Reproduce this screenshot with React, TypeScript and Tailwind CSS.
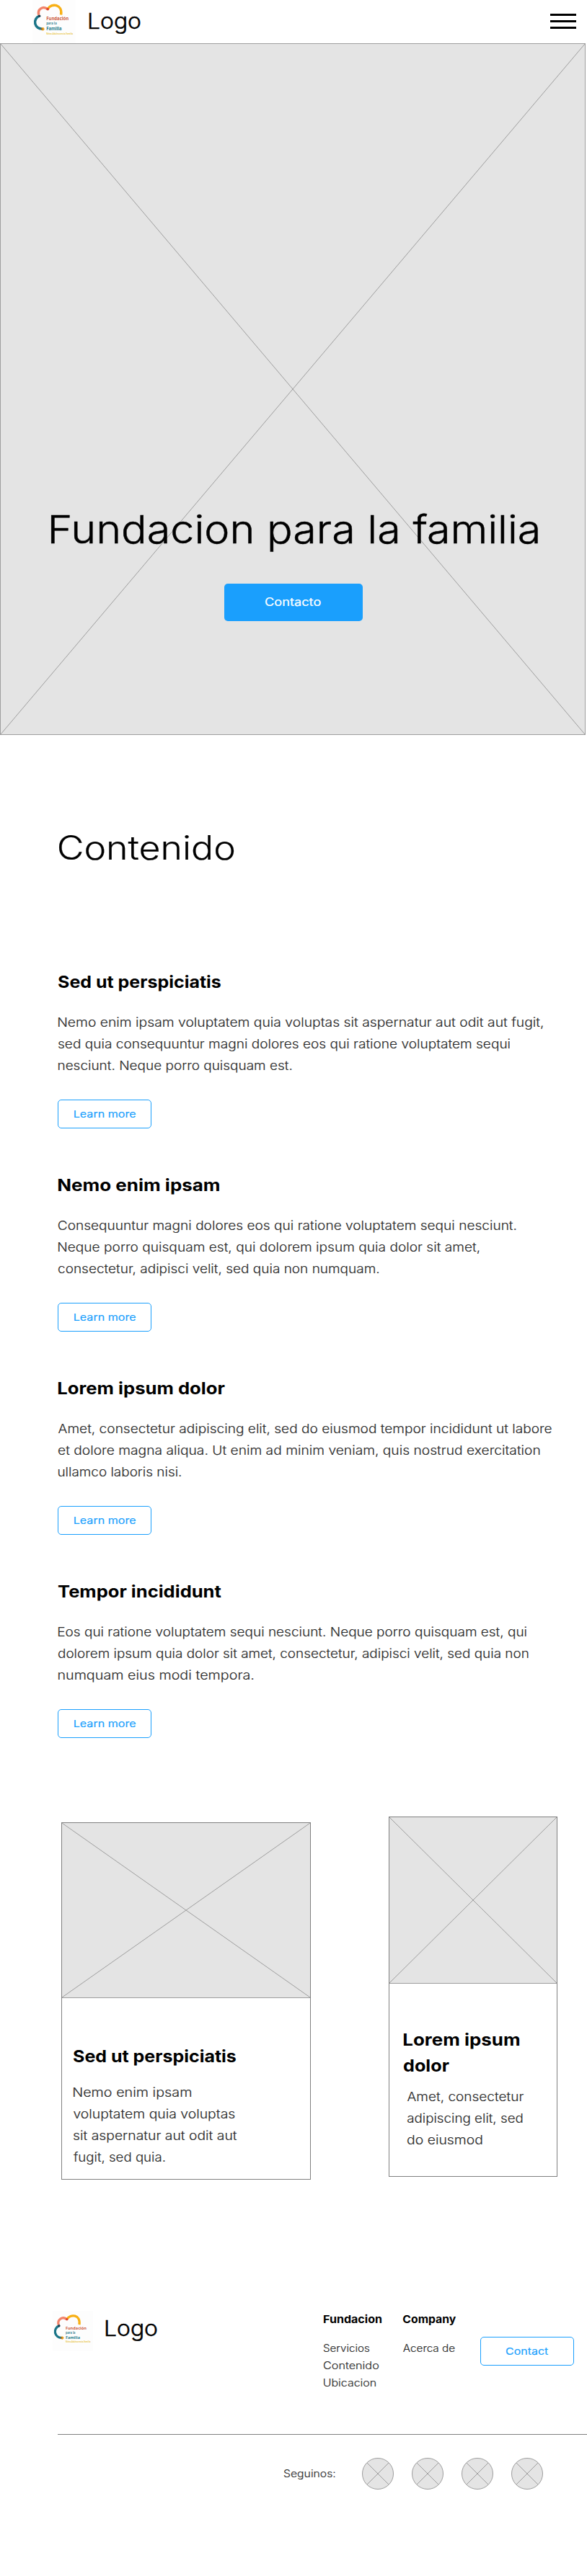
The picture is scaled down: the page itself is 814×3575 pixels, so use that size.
import React, { useLayoutEffect, useRef, useState } from 'react';

/** A single line of text whose glyphs are stretched to span exactly `width` pixels. */
function FitText({ text, width, className = '' }: { text: string; width: number; className?: string }) {
  const ref = useRef<HTMLSpanElement>(null);
  const [transform, setTransform] = useState('none');

  useLayoutEffect(() => {
    const ctx = document.createElement('canvas').getContext('2d');
    if (!ref.current || !ctx) return;
    const style = getComputedStyle(ref.current);
    ctx.font = `${style.fontWeight} ${parseFloat(style.fontSize) * 10}px Inter`;
    const m = ctx.measureText(text);
    const left = -m.actualBoundingBoxLeft / 10;
    const ink = m.actualBoundingBoxRight / 10 - left;
    const scale = width / ink;
    setTransform(`translateX(${-left * scale}px) scaleX(${scale})`);
  }, [text, width]);

  return (
    <span className="block text-left" style={{ width }}>
      <span ref={ref} className={`inline-block origin-left whitespace-nowrap align-top ${className}`} style={{ transform }}>
        {text}
      </span>
    </span>
  );
}

type Line = [text: string, width: number];

function Lines({ lines }: { lines: Line[] }) {
  return (
    <p className="ml-[0.5px] text-[17.3px] leading-[30px] font-light text-[#2b2b2b] [-webkit-text-stroke:0.15px]">
      {lines.map(([text, width]) => (
        <FitText key={text} text={text} width={width} />
      ))}
    </p>
  );
}

function Placeholder({ className = '' }: { className?: string }) {
  return (
    <svg className={`block ${className}`} stroke="#9e9e9e">
      <line x1="0" y1="0" x2="100%" y2="100%" />
      <line x1="100%" y1="0" x2="0" y2="100%" />
    </svg>
  );
}

function BrandMark({ className }: { className: string }) {
  return (
    <svg viewBox="0 0 60 60" className={`overflow-visible ${className}`} fill="none">
      <rect width="60" height="60" fill="#fdfdfd" />
      <path d="M9.6 22.2A9.2 9.2 0 0 0 13.6 40" stroke="#1b7588" strokeWidth="3.5" />
      <path d="M8.8 20.8C6.5 13 14.5 7.500 21 12.600" stroke="#f2836b" strokeWidth="3.500" />
      <path d="M21 12.600C26.500 3.500 42 6 39.600 20.500" stroke="#f8b015" strokeWidth="3.500" />
      <circle cx="9.600" cy="22.200" r="1.800" fill="#173e50" />
      <circle cx="21.200" cy="12.600" r="1.900" fill="#e2452c" />
      <circle cx="14.300" cy="40.300" r="2.200" fill="#eda01c" />
      <circle cx="12.800" cy="40.200" r="1.300" fill="#8b6a3c" />
      <g fontFamily="Open Sans, sans-serif" fontWeight="700">
        <text x="19.200" y="28" fontSize="6.200" fill="#cc5a3d" textLength="31" lengthAdjust="spacingAndGlyphs">Fundación</text>
        <text x="19.200" y="34" fontSize="4.700" fill="#3b8594" textLength="14.500" lengthAdjust="spacingAndGlyphs">para la</text>
        <text x="19.200" y="42" fontSize="6.200" fill="#257c8c" textLength="21.500" lengthAdjust="spacingAndGlyphs">Familia</text>
        <text x="19.200" y="47.500" fontSize="2.700" fill="#e9c64a" textLength="37" lengthAdjust="spacingAndGlyphs">Niñez-Adolescencia-Familia</text>
      </g>
    </svg>
  );
}

function OutlineButton({ text, width }: { text: string; width: number }) {
  return (
    <button className="flex h-10 w-[130px] items-center justify-center rounded-[5px] border border-[#1a9ffd] text-[13.5px] leading-5 font-normal text-[#1a9ffd] [-webkit-text-stroke:0.15px]">
      <FitText text={text} width={width} />
    </button>
  );
}

const articles: { title: Line; lines: Line[] }[] = [
  {
    title: ['Sed ut perspiciatis', 225],
    lines: [
      ['Nemo enim ipsam voluptatem quia voluptas sit aspernatur aut odit aut fugit,', 672.5],
      ['sed quia consequuntur magni dolores eos qui ratione voluptatem sequi', 626.5],
      ['nesciunt. Neque porro quisquam est.', 323.5],
    ],
  },
  {
    title: ['Nemo enim ipsam', 223],
    lines: [
      ['Consequuntur magni dolores eos qui ratione voluptatem sequi nesciunt.', 635],
      ['Neque porro quisquam est, qui dolorem ipsum quia dolor sit amet,', 584],
      ['consectetur, adipisci velit, sed quia non numquam.', 444.5],
    ],
  },
  {
    title: ['Lorem ipsum dolor', 230.5],
    lines: [
      ['Amet, consectetur adipiscing elit, sed do eiusmod tempor incididunt ut labore', 684.5],
      ['et dolore magna aliqua. Ut enim ad minim veniam, quis nostrud exercitation', 668],
      ['ullamco laboris nisi.', 170],
    ],
  },
  {
    title: ['Tempor incididunt', 225.5],
    lines: [
      ['Eos qui ratione voluptatem sequi nesciunt. Neque porro quisquam est, qui', 649.5],
      ['dolorem ipsum quia dolor sit amet, consectetur, adipisci velit, sed quia non', 652],
      ['numquam eius modi tempora.', 270.5],
    ],
  },
];

export default function App() {
  return (
    <div className="h-[3575px] w-[814px] overflow-hidden bg-white font-['Inter',sans-serif] text-black">
      <header className="flex h-[60px] items-center pr-[15px] pl-[45px]">
        <BrandMark className="size-[60px]" />
        <div className="mb-[2px] ml-[19px] text-[30px] leading-9 font-light [-webkit-text-stroke:0.5px]">
          <FitText text="Logo" width={70.5} />
        </div>
        <button aria-label="Menu" className="mb-px ml-auto flex w-9 flex-col gap-1.5">
          <span className="h-[3px] bg-black" />
          <span className="h-[3px] bg-black" />
          <span className="h-[3px] bg-black" />
        </button>
      </header>

      <section className="grid h-[960px] w-[812px] border border-[#9e9e9e] bg-[#e4e4e4]">
        <Placeholder className="col-start-1 row-start-1 size-full" />
        <div className="z-10 col-start-1 row-start-1 pt-[638px]">
          <h1 className="ml-[70px] text-[54px] leading-[72px] font-light [-webkit-text-stroke:0.5px]">
            <FitText text="Fundacion para la familia" width={674.5} />
          </h1>
          <button className="mt-[39px] ml-[310px] flex h-[52px] w-48 items-center justify-center rounded-[5px] bg-[#1a9ffd] pr-0.5 text-[15.5px] leading-6 font-normal text-white [-webkit-text-stroke:0.2px]">
            <FitText text="Contacto" width={76.5} />
          </button>
        </div>
      </section>

      <main className="pt-[126px] pl-20">
        <h2 className="ml-[2px] text-[46px] leading-[60px] font-light [-webkit-text-stroke:0.2px]">
          <FitText text="Contenido" width={242.5} />
        </h2>
        <div className="mt-[138px]">
          {articles.map(({ title, lines }) => (
            <article key={title[0]} className="h-[282px]">
              <h3 className="mb-[23px] ml-[0.5px] pt-px text-[23px] leading-9 font-bold">
                <FitText text={title[0]} width={title[1]} />
              </h3>
              <Lines lines={lines} />
              <div className="mt-8">
                <OutlineButton text="Learn more" width={85} />
              </div>
            </article>
          ))}
        </div>

        <div className="mt-[49px] ml-[5px] flex items-start gap-[108px]">
          <article className="mt-2 h-[496px] w-[346px] border border-[#808080]">
            <Placeholder className="h-[243px] w-full border-b border-[#9e9e9e] bg-[#e4e4e4]" />
            <div className="pt-[63px] pl-[15px]">
              <h3 className="mb-[17px] ml-[0.5px] text-[23px] leading-9 font-bold">
                <FitText text="Sed ut perspiciatis" width={225} />
              </h3>
              <Lines
                lines={[
                  ['Nemo enim ipsam', 163],
                  ['voluptatem quia voluptas', 223.5],
                  ['sit aspernatur aut odit aut', 226.5],
                  ['fugit, sed quia.', 126.5],
                ]}
              />
            </div>
          </article>
          <article className="h-[500px] w-[234px] border border-[#808080]">
            <Placeholder className="h-[231px] w-full border-b border-[#9e9e9e] bg-[#e4e4e4]" />
            <div className="pt-[60px] pl-5">
              <h3 className="mb-[10px] text-[23px] leading-9 font-bold">
                <FitText text="Lorem ipsum" width={160} />
                <FitText text="dolor" width={62.5} />
              </h3>
              <div className="ml-1">
                <Lines
                  lines={[
                    ['Amet, consectetur', 161],
                    ['adipiscing elit, sed', 159.5],
                    ['do eiusmod', 103.5],
                  ]}
                />
              </div>
            </div>
          </article>
        </div>
      </main>

      <footer className="mt-[182px]">
        <div className="flex h-[171px] items-start pl-[73px]">
          <BrandMark className="size-[56px]" />
          <div className="mt-[6px] ml-[18px] text-[30px] leading-9 font-light [-webkit-text-stroke:0.5px]">
            <FitText text="Logo" width={70.5} />
          </div>
          <nav className="ml-[231px] flex text-[14.200px] leading-6 font-light text-[#2b2b2b] [-webkit-text-stroke:0.15px]">
            <div className="w-[110px]">
              <h4 className="mb-4 text-[14.800px] font-bold text-black [-webkit-text-stroke:0]">
                <FitText text="Fundacion" width={80} />
              </h4>
              <FitText text="Servicios" width={63} />
              <FitText text="Contenido" width={76} />
              <FitText text="Ubicacion" width={72} />
            </div>
            <div className="w-[107px]">
              <h4 className="mb-4 text-[14.800px] font-bold text-black [-webkit-text-stroke:0]">
                <FitText text="Company" width={73} />
              </h4>
              <FitText text="Acerca de" width={71.5} />
            </div>
          </nav>
          <div className="mt-9">
            <OutlineButton text="Contact" width={58} />
          </div>
        </div>
        <div className="ml-20 flex items-center border-t border-[#808080] pt-8 pl-[313.500px]">
          <div className="w-[108.500px] text-[14.200px] leading-6 font-light text-[#2b2b2b] [-webkit-text-stroke:0.15px]">
            <FitText text="Seguinos:" width={70.5} />
          </div>
          <div className="flex gap-[25px]">
            {[0, 1, 2, 3].map((i) => (
              <Placeholder key={i} className="size-11 rounded-full border border-[#9e9e9e] bg-[#e4e4e4]" />
            ))}
          </div>
        </div>
      </footer>
    </div>
  );
}
